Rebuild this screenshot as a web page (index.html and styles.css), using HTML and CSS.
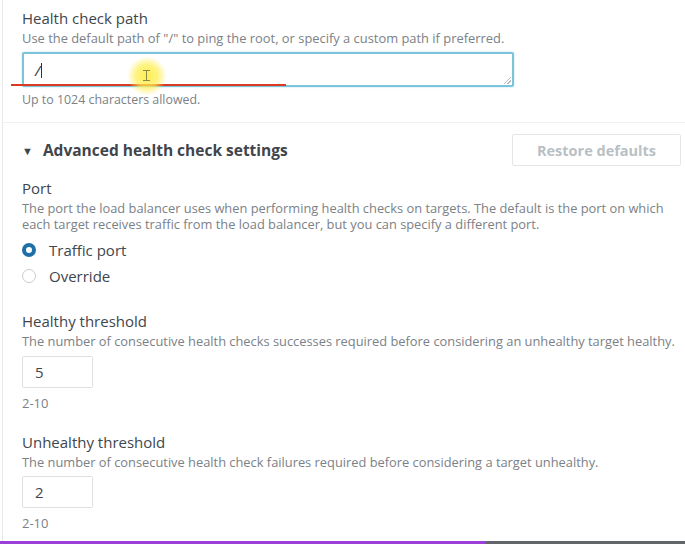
FILE: index.html
```html
<!DOCTYPE html>
<html lang="en">
<head>
<meta charset="utf-8">
<title>Health check settings</title>
<link rel="stylesheet" href="styles.css">
</head>
<body>
<div class="page">
  <section class="field field-path">
    <div class="label">Health check path</div>
    <div class="desc desc-sm">Use the default path of "/" to ping the root, or specify a custom path if preferred.</div>
    <div class="textarea"><span class="value">/</span><span class="caret"></span><span class="grip"></span></div>
    <div class="desc desc-sm hint">Up to 1024 characters allowed.</div>
  </section>
  <div class="sep"></div>
  <section class="advanced">
    <div class="adv-head">
      <div class="adv-title"><span class="tri">&#9660;</span>Advanced health check settings</div>
      <button class="btn-restore">Restore defaults</button>
    </div>
    <div class="field field-port">
      <div class="label">Port</div>
      <div class="desc">The port the load balancer uses when performing health checks on targets. The default is the port on which each target receives traffic from the load balancer, but you can specify a different port.</div>
      <div class="radios">
        <label class="radio"><span class="dot on"></span>Traffic port</label>
        <label class="radio"><span class="dot"></span>Override</label>
      </div>
    </div>
    <div class="field field-num">
      <div class="label">Healthy threshold</div>
      <div class="desc">The number of consecutive health checks successes required before considering an unhealthy target healthy.</div>
      <div class="num">5</div>
      <div class="range">2-10</div>
    </div>
    <div class="field field-num field-num-2">
      <div class="label">Unhealthy threshold</div>
      <div class="desc">The number of consecutive health check failures required before considering a target unhealthy.</div>
      <div class="num">2</div>
      <div class="range">2-10</div>
    </div>
  </section>
  <div class="annot-line"></div>
  <div class="annot-cursor"><span class="ibeam"></span></div>
  <div class="progress"><div class="played"></div></div>
</div>
</body>
</html>
```
FILE: styles.css
```css
* { box-sizing: border-box; }
html, body { margin: 0; padding: 0; background: #fff; }
body {
  font-family: "Open Sans", Roboto, "Liberation Sans", Arial, sans-serif;
  color: #3f454c;
  width: 685px;
  height: 544px;
  overflow: hidden;
}
.page {
  position: relative;
  height: 544px;
  margin-left: 2px;
  border-left: 1px solid #e6e8ea;
  padding-top: 8px;
}
.field { padding-left: 19px; padding-right: 4px; }
.label {
  font-size: 15px;
  line-height: 20px;
  color: #40464d;
}
.desc {
  font-size: 12.85px;
  line-height: 16px;
  color: #7b8187;
  margin-top: 2px;
}
.desc-sm { font-size: 12.9px; }
.textarea {
  position: relative;
  margin-top: 6px;
  width: 492px;
  height: 35px;
  border: 2px solid #7cc3dc;
  border-radius: 2px;
  box-shadow: 0 0 2px #a9d8e8;
  padding: 7px 0 0 11px;
  font-size: 15px;
  line-height: 18px;
  color: #333;
}
.value { font-style: italic; }
.caret {
  display: inline-block;
  width: 1px;
  height: 15px;
  background: #333;
  vertical-align: -2px;
  margin-left: 1px;
}
.grip {
  position: absolute;
  right: 1px;
  bottom: 1px;
  width: 7px;
  height: 7px;
  background: linear-gradient(135deg, transparent 45%, #b8bcc0 45%, #b8bcc0 55%, transparent 55%, transparent 70%, #b8bcc0 70%, #b8bcc0 80%, transparent 80%);
}
.field .hint { margin-top: 5px; font-size: 12.4px; }
.sep {
  height: 1px;
  background: #f0f1f2;
  margin-top: 14px;
}
.adv-head {
  display: flex;
  align-items: center;
  justify-content: space-between;
  margin-top: 11px;
  padding-left: 19px;
  padding-right: 4px;
}
.adv-title {
  font-size: 15.5px;
  font-weight: 700;
  color: #3f454c;
  display: flex;
  align-items: center;
}
.tri { font-size: 11px; margin-right: 10px; color: #3f454c; }
.btn-restore {
  width: 169px;
  height: 32px;
  border: 1px solid #e4e6e8;
  background: #fff;
  border-radius: 2px;
  font-family: inherit;
  font-size: 14.5px;
  font-weight: 700;
  color: #b9c0c4;
}
.field-port { margin-top: 12px; }
.radios { margin-top: 5px; display: flex; flex-direction: column; }
.radio {
  display: flex;
  align-items: center;
  height: 26px;
  font-size: 15px;
  color: #40464d;
}
.dot {
  width: 14px;
  height: 14px;
  border-radius: 50%;
  border: 1px solid #c9cdd1;
  margin-right: 13px;
  background: #fff;
}
.dot.on { border: 4px solid #1f6fa8; }
.field-num { margin-top: 22px; }
.field-num-2 { margin-top: 21px; }
.num {
  margin-top: 7px;
  width: 71px;
  height: 32px;
  border: 1px solid #dfe2e5;
  border-radius: 2px;
  padding-left: 12px;
  font-size: 15px;
  line-height: 30px;
  color: #3f454c;
}
.field-num-2 .num { margin-top: 6px; }
.range {
  margin-top: 7px;
  font-size: 13px;
  line-height: 16px;
  color: #7b8187;
}
.annot-line {
  position: absolute;
  left: 8px;
  top: 84px;
  width: 275px;
  height: 2px;
  background: #d93a22;
}
.annot-cursor {
  position: absolute;
  left: 124px;
  top: 56px;
  width: 40px;
  height: 40px;
  border-radius: 50%;
  background: radial-gradient(circle, rgba(255,236,60,0.9) 0%, rgba(255,238,80,0.7) 40%, rgba(255,245,150,0) 70%);
}
.ibeam {
  position: absolute;
  left: 19px;
  top: 14px;
  width: 1px;
  height: 11px;
  background: #8a8a4a;
}
.ibeam::before, .ibeam::after {
  content: "";
  position: absolute;
  left: -3px;
  width: 7px;
  height: 1px;
  background: #8a8a4a;
}
.ibeam::before { top: 0; }
.ibeam::after { bottom: 0; }
.progress {
  position: absolute;
  left: -3px;
  right: 0;
  bottom: 0;
  height: 3px;
  background: #62666a;
}
.played { width: 485px; height: 3px; background: #9b3fd8; }
```
